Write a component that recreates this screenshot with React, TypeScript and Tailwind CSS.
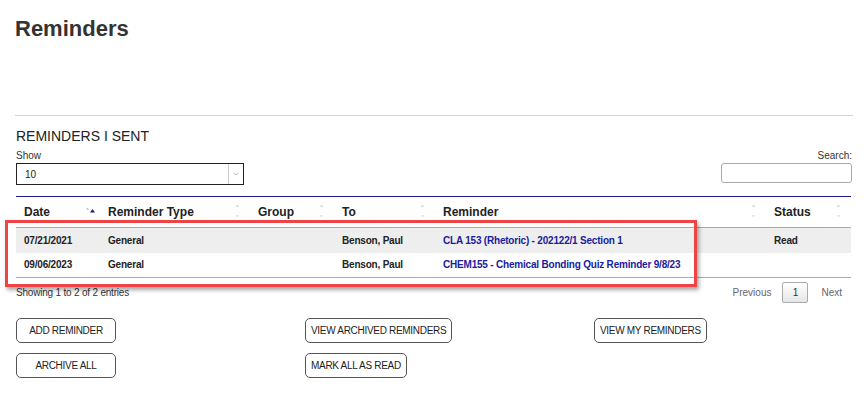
import React from "react";

const font = { fontFamily: '"Liberation Sans", Arial, sans-serif' };

function SortIcon({ active }: { active?: boolean }) {
  if (active) {
    return (
      <svg width="11" height="8" viewBox="0 0 11 8" className="absolute right-[4px] top-[10px]">
        <path d="M1 2.5 L2.5 0.5 L4 2.5 Z" fill="#bbb" />
        <path d="M5 5.5 L7.5 2 L10 5.5 Z" fill="#1c1c8c" />
      </svg>
    );
  }
  return (
    <svg width="5" height="14" viewBox="0 0 5 14" className="absolute right-[10px] top-[7px]">
      <path d="M0.5 3 L2.5 0.5 L4.5 3 Z" fill="#dcdcdc" />
      <path d="M0.5 11 L2.5 13.5 L4.5 11 Z" fill="#e4e4e4" />
    </svg>
  );
}

const columns = [
  { label: "Date", w: "w-[84px]", active: true },
  { label: "Reminder Type", w: "w-[150px]" },
  { label: "Group", w: "w-[84px]" },
  { label: "To", w: "w-[101px]" },
  { label: "Reminder", w: "w-[331px]" },
  { label: "Status", w: "w-[85px]" },
];

const rows = [
  { date: "07/21/2021", type: "General", group: "", to: "Benson, Paul", reminder: "CLA 153 (Rhetoric) - 202122/1 Section 1", status: "Read" },
  { date: "09/06/2023", type: "General", group: "", to: "Benson, Paul", reminder: "CHEM155 - Chemical Bonding Quiz Reminder 9/8/23", status: "" },
];

function Btn({ children }: { children: React.ReactNode }) {
  return (
    <button className="h-[25px] min-w-[100px] px-[5px] border border-[#555] rounded-[5px] bg-white text-[10px] tracking-[-0.3px] text-[#222] whitespace-nowrap">
      {children}
    </button>
  );
}

export default function App() {
  return (
    <div className="relative w-[868px] h-[400px] bg-white overflow-hidden text-[#222]" style={font}>
      <div className="pl-[15px] pr-[15px] pt-[16px]">
        <h1 className="text-[22px] leading-[26px] font-bold text-[#333]">Reminders</h1>
        <div className="mt-[73px] h-px bg-[#d6d6d6]" />

        <div className="pl-px">
          <h2 className="mt-[12px] text-[14px] leading-[16px] text-[#222]">REMINDERS I SENT</h2>

          <div className="flex justify-between items-end">
            <div>
              <div className="mt-[6px] text-[10px] leading-[12px] text-[#333]">Show</div>
              <div className="mt-px w-[228px] h-[22px] border-[1.5px] border-[#222] flex items-center">
                <span className="flex-1 pl-[8px] text-[10px] text-[#222]">10</span>
                <div className="w-px h-full bg-[#ccc]" />
                <svg width="12" height="20" viewBox="0 0 12 20" className="mx-[1px]">
                  <path d="M3.5 9 L6 11 L8.5 9" stroke="#bbb" strokeWidth="1" fill="none" />
                </svg>
              </div>
            </div>
            <div className="flex flex-col items-end mr-[1px]">
              <div className="text-[10px] leading-[12px] text-[#333]">Search:</div>
              <div className="mt-[1px] w-[131px] h-[20px] border border-[#aaa] rounded-[3px] mb-[2px]" />
            </div>
          </div>

          <table className="mt-[11px] table-fixed border-collapse w-[835px]">
            <thead>
              <tr className="border-t border-[#1c1c8c] border-b border-b-[#aaa]">
                {columns.map((c) => (
                  <th
                    key={c.label}
                    className={`${c.w} relative h-[31px] pl-[8px] text-left text-[12px] font-bold text-[#222]`}
                  >
                    {c.label}
                    <SortIcon active={c.active} />
                  </th>
                ))}
              </tr>
            </thead>
            <tbody className="border-b border-[#aaa] text-[10px] font-bold tracking-[-0.2px]">
              {rows.map((r, i) => (
                <tr key={r.date} className={i === 0 ? "bg-[#eeeeee]" : "bg-white"}>
                  <td className="h-[25px] pl-[8px]">{r.date}</td>
                  <td className="pl-[8px]">{r.type}</td>
                  <td className="pl-[8px]">{r.group}</td>
                  <td className="pl-[8px]">{r.to}</td>
                  <td className="pl-[8px] text-[#1b1b9e]">{r.reminder}</td>
                  <td className="pl-[8px]">{r.status}</td>
                </tr>
              ))}
            </tbody>
          </table>

          <div className="flex justify-between items-start mt-[4px]">
            <div className="mt-[5px] text-[10px] leading-[12px] tracking-[-0.2px] text-[#333]">Showing 1 to 2 of 2 entries</div>
            <div className="flex items-center mr-[11px] text-[10px] text-[#666]">
              <span className="mr-[11px]">Previous</span>
              <span className="w-[26px] h-[21px] flex items-center justify-center border border-[#aaa] rounded-[2px] bg-gradient-to-b from-white to-[#e6e6e6] text-[#333]">1</span>
              <span className="ml-[13px]">Next</span>
            </div>
          </div>

          <div className="mt-[14px] grid grid-cols-[289px_289px_200px] gap-y-[9px] justify-start">
            <div><Btn>ADD REMINDER</Btn></div>
            <div><Btn>VIEW ARCHIVED REMINDERS</Btn></div>
            <div><Btn>VIEW MY REMINDERS</Btn></div>
            <div><Btn>ARCHIVE ALL</Btn></div>
            <div><Btn>MARK ALL AS READ</Btn></div>
          </div>
        </div>
      </div>

      {/* annotation box */}
      <div className="absolute left-[5px] top-[220px] w-[692px] h-[67px] border-[3px] border-[#ee4444] shadow-[2px_3px_4px_rgba(0,0,0,0.35)] pointer-events-none" />
    </div>
  );
}
